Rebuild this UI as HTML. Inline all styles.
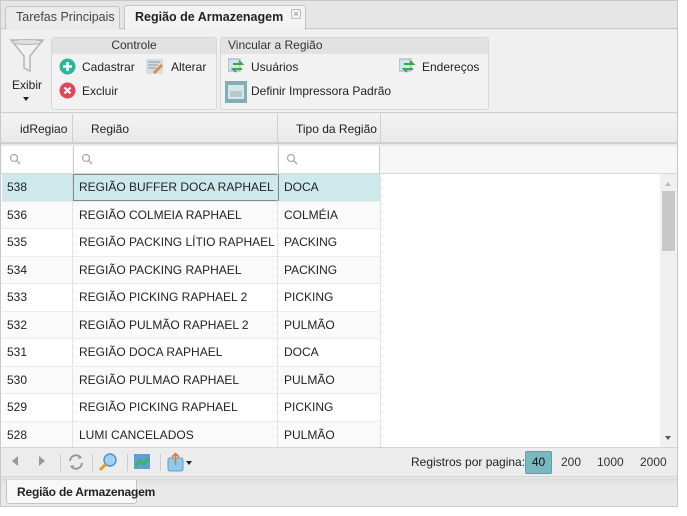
<!DOCTYPE html>
<html><head><meta charset="utf-8"><style>
*{box-sizing:border-box;margin:0;padding:0}
body{width:687px;height:516px;background:#fff;font-family:"Liberation Sans",Arial,sans-serif;font-size:12px;color:#333;position:relative;overflow:hidden}
.abs{position:absolute}
#frame{left:0;top:0;width:678px;height:507px;border:1px solid #c8c8c8;background:#e9e9e9}
.tab{position:absolute;height:23px;border:1px solid #c4c4c4;border-bottom:none;border-radius:3px 3px 0 0;font-size:12.5px;line-height:21px;padding-left:10px;white-space:nowrap}
.grp{position:absolute;border:1px solid #d6d6d6;border-radius:3px;background:#f2f2f2}
.gh{height:16px;background:#e2e2e2;font-size:12px;line-height:15px}
.it{position:absolute;font-size:12px;color:#222;line-height:14px;white-space:nowrap}
.row{position:absolute;left:1px;width:378px;height:27.5px;border-bottom:1px solid #ececec;font-size:12px;line-height:27px;color:#222;white-space:nowrap}
.row span{position:absolute;top:0;height:100%}
.c1{left:5px}.c2{left:77px}.c3{left:282px}
.vl{position:absolute;top:0;bottom:0;border-left:1px dotted #cfcfcf}
</style></head><body>
<div id="frame" class="abs">
 <div class="abs" style="left:0;top:0;width:676px;height:28px;background:#e6e6e6;border-bottom:1px solid #c8c8c8"></div>
 <div class="tab" style="left:4px;top:5px;width:115px;background:#ebebeb;color:#444">Tarefas Principais</div>
 <div class="tab" style="left:123px;top:4px;width:182px;height:25px;background:#f3f3f3;font-weight:bold;color:#222;line-height:23px">Região de Armazenagem
  <span class="abs" style="left:166px;top:3px;width:10px;height:10px;border:1px solid #bbb;border-radius:2px;font-size:9px;line-height:8px;text-align:center;color:#888;font-weight:normal">×</span></div>
 <div class="abs" style="left:0;top:29px;width:676px;height:83px;background:#f0f0f0;border-bottom:1px solid #d0d0d0"></div>
 <svg class="abs" style="left:8px;top:37px" width="36" height="36" viewBox="0 0 36 36"><path d="M2 2 H34 L21 18 V33 L15 30 V18 Z" fill="#f2f2f2" stroke="#b5b5b5" stroke-width="1.5"/><ellipse cx="18" cy="4" rx="15" ry="2.5" fill="#e0e0e0" stroke="#b5b5b5"/></svg>
 <div class="it" style="left:11px;top:77px;font-size:12px">Exibir</div>
 <div class="abs" style="left:22px;top:96px;border-left:3px solid transparent;border-right:3px solid transparent;border-top:4px solid #222"></div>
 <div class="grp" style="left:50px;top:36px;width:166px;height:73px"><div class="gh" style="text-align:center">Controle</div></div>
 <svg class="abs" style="left:58px;top:57px" width="17" height="17"><circle cx="8.5" cy="8.5" r="8" fill="#2bb59a"/><path d="M8.5 4v9M4 8.5h9" stroke="#fff" stroke-width="2.6"/></svg>
 <div class="it" style="left:81px;top:59px">Cadastrar</div>
 <svg class="abs" style="left:145px;top:57px" width="18" height="17"><rect x="0" y="1" width="17" height="15" fill="#d8dde2"/><path d="M2 4h12M2 7h10M2 10h8" stroke="#8a96a8"/><path d="M7 14l8-8 2 2-8 8z" fill="#e08a3a"/></svg>
 <div class="it" style="left:170px;top:59px">Alterar</div>
 <svg class="abs" style="left:58px;top:81px" width="17" height="17"><circle cx="8.5" cy="8.5" r="8" fill="#e0485a"/><path d="M5.5 5.5l6 6M11.5 5.5l-6 6" stroke="#fff" stroke-width="2.2"/></svg>
 <div class="it" style="left:81px;top:83px">Excluir</div>
 <div class="grp" style="left:219px;top:36px;width:269px;height:73px"><div class="gh" style="padding-left:7px">Vincular a Região</div></div>
 <svg class="abs" style="left:227px;top:57px" width="17" height="16"><rect x="0" y="1" width="12" height="12" fill="#d5e3f0" stroke="#9ab"/><path d="M5 6h9l-3-3M14 11H5l3 3" stroke="#3aa845" stroke-width="2" fill="none"/></svg>
 <div class="it" style="left:250px;top:59px">Usuários</div>
 <svg class="abs" style="left:398px;top:57px" width="17" height="16"><rect x="0" y="1" width="12" height="12" fill="#d5e3f0" stroke="#9ab"/><path d="M5 6h9l-3-3M14 11H5l3 3" stroke="#3aa845" stroke-width="2" fill="none"/></svg>
 <div class="it" style="left:421px;top:59px">Endereços</div>
 <svg class="abs" style="left:224px;top:80px" width="22" height="22"><rect x="0" y="0" width="22" height="22" fill="#7fb0b8"/><rect x="3" y="4" width="16" height="14" fill="#d8e4e6"/><rect x="5" y="10" width="12" height="6" fill="#b8c8cc"/></svg>
 <div class="it" style="left:250px;top:83px">Definir Impressora Padrão</div>
 <div class="abs" style="left:0;top:113px;width:676px;height:30px;background:linear-gradient(#f3f3f3,#e9e9e9);border-bottom:2px solid #cfcfcf"></div>
 <div class="abs" style="left:71px;top:113px;height:30px;border-left:1px solid #d0d0d0"></div>
 <div class="abs" style="left:276px;top:113px;height:30px;border-left:1px solid #d0d0d0"></div>
 <div class="abs" style="left:379px;top:113px;height:30px;border-left:1px solid #d0d0d0"></div>
 <div class="it" style="left:19px;top:121px">idRegiao</div>
 <div class="it" style="left:90px;top:121px">Região</div>
 <div class="it" style="left:295px;top:121px">Tipo da Região</div>
 <div class="abs" style="left:0;top:145px;width:676px;height:28px;background:#f6f6f6;border-bottom:1px solid #d8d8d8"></div>
 <div class="abs" style="left:1px;top:145px;width:70px;height:27px;background:#fff"></div>
 <div class="abs" style="left:72px;top:145px;width:204px;height:27px;background:#fff;border-left:1px solid #ccc"></div>
 <div class="abs" style="left:277px;top:145px;width:102px;height:27px;background:#fff;border-left:1px solid #ccc;border-right:1px solid #ccc"></div>
 <svg class="abs" style="left:8px;top:152px" width="12" height="12"><circle cx="5" cy="5" r="3.5" fill="none" stroke="#aaa" stroke-width="1.3"/><path d="M7.5 7.5l3.5 3.5" stroke="#aaa" stroke-width="1.5"/></svg>
 <svg class="abs" style="left:80px;top:152px" width="12" height="12"><circle cx="5" cy="5" r="3.5" fill="none" stroke="#aaa" stroke-width="1.3"/><path d="M7.5 7.5l3.5 3.5" stroke="#aaa" stroke-width="1.5"/></svg>
 <svg class="abs" style="left:285px;top:152px" width="12" height="12"><circle cx="5" cy="5" r="3.5" fill="none" stroke="#aaa" stroke-width="1.3"/><path d="M7.5 7.5l3.5 3.5" stroke="#aaa" stroke-width="1.5"/></svg>
 <div class="abs" style="left:0;top:173px;width:676px;height:273px;background:#fff;overflow:hidden">
  <div class="abs" style="left:0;top:0;width:380px;height:273px">
   <div class="row" style="top:0;background:#cde9ec"><span class="c1">538</span><span class="c2" style="left:71px;width:206px;border:1px solid #888;padding-left:5px;line-height:25px">REGIÃO BUFFER DOCA RAPHAEL</span><span class="c3">DOCA</span></div>
   <div class="row" style="top:27.5px;background:#fafafa"><span class="c1">536</span><span class="c2">REGIÃO COLMEIA RAPHAEL</span><span class="c3">COLMÉIA</span></div>
   <div class="row" style="top:55px"><span class="c1">535</span><span class="c2">REGIÃO PACKING LÍTIO RAPHAEL</span><span class="c3">PACKING</span></div>
   <div class="row" style="top:82.5px;background:#fafafa"><span class="c1">534</span><span class="c2">REGIÃO PACKING RAPHAEL</span><span class="c3">PACKING</span></div>
   <div class="row" style="top:110px"><span class="c1">533</span><span class="c2">REGIÃO PICKING RAPHAEL 2</span><span class="c3">PICKING</span></div>
   <div class="row" style="top:137.5px;background:#fafafa"><span class="c1">532</span><span class="c2">REGIÃO PULMÃO RAPHAEL 2</span><span class="c3">PULMÃO</span></div>
   <div class="row" style="top:165px"><span class="c1">531</span><span class="c2">REGIÃO DOCA RAPHAEL</span><span class="c3">DOCA</span></div>
   <div class="row" style="top:192.5px;background:#fafafa"><span class="c1">530</span><span class="c2">REGIÃO PULMAO RAPHAEL</span><span class="c3">PULMÃO</span></div>
   <div class="row" style="top:220px"><span class="c1">529</span><span class="c2">REGIÃO PICKING RAPHAEL</span><span class="c3">PICKING</span></div>
   <div class="row" style="top:247.5px;background:#fafafa"><span class="c1">528</span><span class="c2">LUMI CANCELADOS</span><span class="c3">PULMÃO</span></div>
   <div class="vl" style="left:71px"></div><div class="vl" style="left:276px"></div><div class="vl" style="left:379px"></div>
  </div>
  <div class="abs" style="left:659px;top:0;width:17px;height:273px;background:#f0f0f0"></div>
  <div class="abs" style="left:664px;top:8px;border-left:3px solid transparent;border-right:3px solid transparent;border-bottom:4px solid #bbb"></div>
  <div class="abs" style="left:661px;top:17px;width:13px;height:60px;background:#c8c8c8"></div>
  <div class="abs" style="left:664px;top:262px;border-left:3px solid transparent;border-right:3px solid transparent;border-top:4px solid #555"></div>
 </div>
 <div class="abs" style="left:0;top:446px;width:676px;height:30px;background:#ececec;border-top:1px solid #d4d4d4;border-bottom:1px solid #d4d4d4"></div>
 <div class="abs" style="left:11px;top:455px;border-top:5px solid transparent;border-bottom:5px solid transparent;border-right:6px solid #999"></div>
 <div class="abs" style="left:38px;top:455px;border-top:5px solid transparent;border-bottom:5px solid transparent;border-left:6px solid #999"></div>
 <div class="abs" style="left:59px;top:453px;height:17px;border-left:1px solid #ccc"></div>
 <svg class="abs" style="left:66px;top:452px" width="18" height="18"><path d="M3 8a6 6 0 0 1 11-3M15 10a6 6 0 0 1-11 3" stroke="#999" stroke-width="2" fill="none"/><path d="M12 2l3 3-4 1zM6 16l-3-3 4-1z" fill="#999"/></svg>
 <div class="abs" style="left:91px;top:453px;height:17px;border-left:1px solid #ccc"></div>
 <svg class="abs" style="left:97px;top:451px" width="20" height="20"><circle cx="12" cy="8" r="6" fill="#9fd0f5" stroke="#4a90c8" stroke-width="1.4"/><path d="M8 12l-6 6" stroke="#e09a2a" stroke-width="3"/></svg>
 <div class="abs" style="left:126px;top:453px;height:17px;border-left:1px solid #ccc"></div>
 <svg class="abs" style="left:133px;top:452px" width="17" height="17"><rect x="0" y="1" width="16" height="15" fill="#5a9fd6"/><path d="M2 13l4-5 4 3 5-6" stroke="#3cb84a" stroke-width="2.5" fill="none"/></svg>
 <div class="abs" style="left:159px;top:453px;height:17px;border-left:1px solid #ccc"></div>
 <svg class="abs" style="left:166px;top:451px" width="18" height="20"><rect x="1" y="6" width="15" height="13" rx="2" fill="#8ec9ef" stroke="#5aa0d0"/><path d="M8.5 13V2M5 5l3.5-3.5L12 5" stroke="#e07a3a" stroke-width="1.6" fill="none"/></svg>
 <div class="abs" style="left:185px;top:460px;border-left:3px solid transparent;border-right:3px solid transparent;border-top:4px solid #222"></div>
 <div class="it" style="left:410px;top:454px;color:#222">Registros por pagina:</div>
 <div class="abs" style="left:524px;top:450px;width:27px;height:23px;background:#79b8bf;border:1px solid #5e9ea4;border-radius:2px;text-align:center;line-height:21px;color:#111">40</div>
 <div class="it" style="left:560px;top:454px;color:#333">200</div>
 <div class="it" style="left:596px;top:454px;color:#333">1000</div>
 <div class="it" style="left:639px;top:454px;color:#333">2000</div>
 <div class="abs" style="left:0;top:477px;width:676px;height:28px;background:linear-gradient(#dcdcdc,#e9e9e9 8px)"></div>
 <div class="abs" style="left:5px;top:479px;width:131px;height:24px;background:#f8f8f8;border:1px solid #c4c4c4;border-top:none;border-radius:0 0 3px 3px;font-weight:bold;font-size:12px;line-height:25px;padding-left:10px;color:#222;white-space:nowrap;letter-spacing:-0.2px">Região de Armazenagem</div>
</div>
</body></html>
